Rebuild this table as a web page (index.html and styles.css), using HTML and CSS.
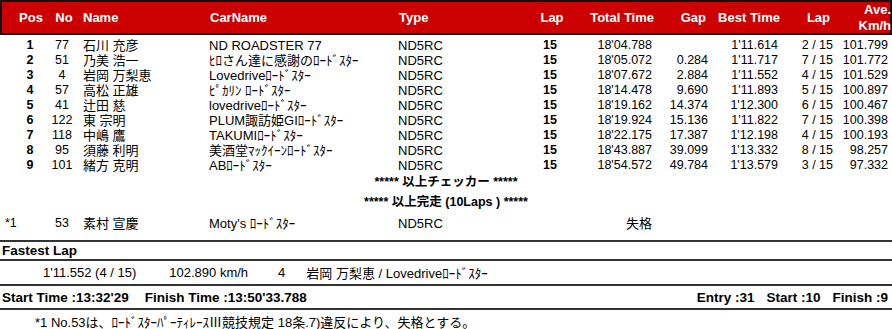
FILE: index.html
```html
<!DOCTYPE html>
<html lang="ja">
<head>
<meta charset="utf-8">
<title>Result</title>
<link rel="stylesheet" href="styles.css">
</head>
<body>
<div class="sheet">
  <div class="head row">
    <div class="c-pos">Pos</div>
    <div class="c-no">No</div>
    <div class="c-name">Name</div>
    <div class="c-car">CarName</div>
    <div class="c-type">Type</div>
    <div class="c-lap">Lap</div>
    <div class="c-total">Total Time</div>
    <div class="c-gap gap-h">Gap</div>
    <div class="c-best">Best Time</div>
    <div class="c-lap2 lap2-h">Lap</div>
    <div class="c-ave ave-h">Ave.<br>Km/h</div>
  </div>

  <div class="body">
    <div class="row line"><div class="c-pos b">1</div><div class="c-no">77</div><div class="c-name">石川 充彦</div><div class="c-car">ND ROADSTER 77</div><div class="c-type">ND5RC</div><div class="c-lap b">15</div><div class="c-total">18'04.788</div><div class="c-gap"></div><div class="c-best">1'11.614</div><div class="c-lap2">2 / 15</div><div class="c-ave">101.799</div></div>
    <div class="row line"><div class="c-pos b">2</div><div class="c-no">51</div><div class="c-name">乃美 浩一</div><div class="c-car">ﾋﾛさん達に感謝のﾛｰﾄﾞｽﾀｰ</div><div class="c-type">ND5RC</div><div class="c-lap b">15</div><div class="c-total">18'05.072</div><div class="c-gap">0.284</div><div class="c-best">1'11.717</div><div class="c-lap2">7 / 15</div><div class="c-ave">101.772</div></div>
    <div class="row line"><div class="c-pos b">3</div><div class="c-no">4</div><div class="c-name">岩岡 万梨恵</div><div class="c-car">Lovedriveﾛｰﾄﾞｽﾀｰ</div><div class="c-type">ND5RC</div><div class="c-lap b">15</div><div class="c-total">18'07.672</div><div class="c-gap">2.884</div><div class="c-best">1'11.552</div><div class="c-lap2">4 / 15</div><div class="c-ave">101.529</div></div>
    <div class="row line"><div class="c-pos b">4</div><div class="c-no">57</div><div class="c-name">高松 正雄</div><div class="c-car">ﾋﾟｶﾘﾝ ﾛｰﾄﾞｽﾀｰ</div><div class="c-type">ND5RC</div><div class="c-lap b">15</div><div class="c-total">18'14.478</div><div class="c-gap">9.690</div><div class="c-best">1'11.893</div><div class="c-lap2">5 / 15</div><div class="c-ave">100.897</div></div>
    <div class="row line"><div class="c-pos b">5</div><div class="c-no">41</div><div class="c-name">辻田 慈</div><div class="c-car">lovedriveﾛｰﾄﾞｽﾀｰ</div><div class="c-type">ND5RC</div><div class="c-lap b">15</div><div class="c-total">18'19.162</div><div class="c-gap">14.374</div><div class="c-best">1'12.300</div><div class="c-lap2">6 / 15</div><div class="c-ave">100.467</div></div>
    <div class="row line"><div class="c-pos b">6</div><div class="c-no">122</div><div class="c-name">東 宗明</div><div class="c-car">PLUM諏訪姫GIﾛｰﾄﾞｽﾀｰ</div><div class="c-type">ND5RC</div><div class="c-lap b">15</div><div class="c-total">18'19.924</div><div class="c-gap">15.136</div><div class="c-best">1'11.822</div><div class="c-lap2">7 / 15</div><div class="c-ave">100.398</div></div>
    <div class="row line"><div class="c-pos b">7</div><div class="c-no">118</div><div class="c-name">中嶋 鷹</div><div class="c-car">TAKUMIﾛｰﾄﾞｽﾀｰ</div><div class="c-type">ND5RC</div><div class="c-lap b">15</div><div class="c-total">18'22.175</div><div class="c-gap">17.387</div><div class="c-best">1'12.198</div><div class="c-lap2">4 / 15</div><div class="c-ave">100.193</div></div>
    <div class="row line"><div class="c-pos b">8</div><div class="c-no">95</div><div class="c-name">須藤 利明</div><div class="c-car">美酒堂ﾏｯｸｲｰﾝﾛｰﾄﾞｽﾀｰ</div><div class="c-type">ND5RC</div><div class="c-lap b">15</div><div class="c-total">18'43.887</div><div class="c-gap">39.099</div><div class="c-best">1'13.332</div><div class="c-lap2">8 / 15</div><div class="c-ave">98.257</div></div>
    <div class="row line"><div class="c-pos b">9</div><div class="c-no">101</div><div class="c-name">緒方 克明</div><div class="c-car">ABﾛｰﾄﾞｽﾀｰ</div><div class="c-type">ND5RC</div><div class="c-lap b">15</div><div class="c-total">18'54.572</div><div class="c-gap">49.784</div><div class="c-best">1'13.579</div><div class="c-lap2">3 / 15</div><div class="c-ave">97.332</div></div>

    <div class="notice checker">***** 以上チェッカー *****</div>
    <div class="notice finish">***** 以上完走 (10Laps ) *****</div>

    <div class="row line dq"><div class="c-pos pos-dq">*1</div><div class="c-no">53</div><div class="c-name">素村 宣慶</div><div class="c-car">Moty's ﾛｰﾄﾞｽﾀｰ</div><div class="c-type">ND5RC</div><div class="c-lap"></div><div class="c-total dq-mark">失格</div><div class="c-gap"></div><div class="c-best"></div><div class="c-lap2"></div><div class="c-ave"></div></div>
  </div>

  <div class="section">
    <div class="sec-title">Fastest Lap</div>
    <div class="fl-row">
      <span class="fl-time">1'11.552 (4 / 15)</span>
      <span class="fl-speed">102.890 km/h</span>
      <span class="fl-no">4</span>
      <span class="fl-who">岩岡 万梨恵 / Lovedriveﾛｰﾄﾞｽﾀｰ</span>
    </div>
    <div class="stats">
      <div class="stats-left"><span>Start Time :13:32'29</span><span>Finish Time :13:50'33.788</span></div>
      <div class="stats-right"><span>Entry :31</span><span>Start :10</span><span>Finish :9</span></div>
    </div>
  </div>
  <div class="footnote">*1 No.53は、ﾛｰﾄﾞｽﾀｰﾊﾟｰﾃｨﾚｰｽⅢ競技規定 18条.7)違反により、失格とする。</div>
</div>
</body>
</html>
```

FILE: styles.css
```css
html, body {
  margin: 0;
  padding: 0;
  background: #fff;
}
body {
  font-family: "Liberation Sans", Arial, "Noto Sans CJK JP", sans-serif;
  font-size: 12.5px;
  color: #000;
}
.sheet {
  width: 892px;
}
.row {
  display: grid;
  grid-template-columns: 50px 24px 131px 190px 125px 60px 75px 55px 70px 60px 52px;
  white-space: nowrap;
}
.head {
  box-sizing: border-box;
  height: 35px;
  background: #cc0000;
  border: 2px solid #111;
  color: #fff;
  font-weight: bold;
  font-size: 13px;
  align-items: center;
}
.head > div { line-height: 16px; }
.c-pos { text-align: center; padding-left: 10px; }
.c-no { text-align: center; }
.c-name { padding-left: 9px; font-size: 13px; }
.c-car { padding-left: 4px; font-size: 13px; }
.c-type { padding-left: 3px; font-size: 13px; }
.c-lap { text-align: center; }
.c-total { text-align: right; padding-right: 3px; }
.c-gap { text-align: right; padding-right: 2px; }
.c-best { text-align: right; padding-right: 2px; }
.c-lap2 { text-align: right; padding-right: 7px; }
.c-ave { text-align: right; padding-right: 4px; }
.head .c-pos { padding-left: 8px; }
.head .c-no { padding-left: 0; }
.head .c-name { padding-left: 7px; }
.head .c-car { padding-left: 3px; }
.head .c-type { padding-left: 2px; }
.gap-h { padding-right: 6px; }
.lap2-h { padding-right: 12px; }
.ave-h { padding-right: 3px; }
.dq-mark { font-size: 13px; }

.body { padding-top: 3px; }
.line { height: 15px; line-height: 15px; }
.b { font-weight: bold; }
.notice {
  text-align: center;
  font-weight: bold;
  font-size: 12.5px;
}
.checker { height: 19px; line-height: 19px; }
.finish { height: 21px; line-height: 21px; }
.dq { height: 21px; line-height: 21px; }
.pos-dq { text-align: left; padding-left: 5px; }

.section {
  margin-top: 6px;
  border-top: 2px solid #333;
}
.sec-title {
  font-weight: bold;
  font-size: 13.5px;
  height: 17px;
  line-height: 17px;
  padding-left: 2px;
  border-bottom: 2px solid #333;
}
.fl-row {
  display: flex;
  height: 23px;
  align-items: center;
  padding-left: 43px;
  border-bottom: 2px solid #333;
  white-space: nowrap;
  font-size: 13px;
}
.fl-speed { margin-left: 33px; }
.fl-no { margin-left: 30px; }
.fl-who { margin-left: 21px; }
.stats {
  display: flex;
  justify-content: space-between;
  height: 22px;
  align-items: center;
  font-weight: bold;
  font-size: 13.5px;
  padding: 0 4px 0 2px;
  border-bottom: 2px solid #333;
  white-space: nowrap;
}
.stats-left { display: flex; gap: 16px; }
.stats-right { display: flex; gap: 12px; }
.footnote {
  padding-left: 35px;
  padding-top: 3px;
  height: 19px;
  line-height: 19px;
  white-space: nowrap;
  font-size: 13px;
}
```
